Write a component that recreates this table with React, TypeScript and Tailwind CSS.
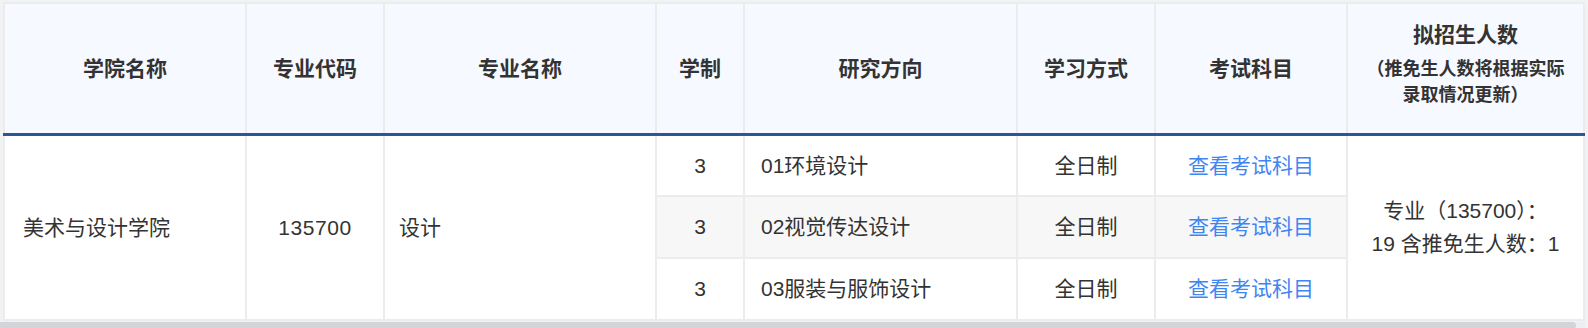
import React from "react";

const font = { fontFamily: '"Liberation Sans", "Noto Sans CJK SC", sans-serif' };

const rows = [
  { dir: "01环境设计", bg: "bg-white" },
  { dir: "02视觉传达设计", bg: "bg-[#f7f7f7]" },
  { dir: "03服装与服饰设计", bg: "bg-white" },
];

export default function App() {
  const th =
    "border-2 border-[#ececec] border-b-[3px] border-b-[#2d5697] bg-[#f6f9ff] text-[21px] font-bold text-[#333] text-center align-middle";
  const td = "border-2 border-[#ececec] text-[21px] align-middle";
  return (
    <div className="w-[1588px] h-[328px] bg-[#f1f2f4] pt-[2px] pl-[3px] overflow-hidden text-[#333]" style={font}>
      <table className="border-collapse table-fixed w-[1582px] bg-white">
        <colgroup>
          <col className="w-[242px]" />
          <col className="w-[138px]" />
          <col className="w-[272px]" />
          <col className="w-[88px]" />
          <col className="w-[273px]" />
          <col className="w-[138px]" />
          <col className="w-[192px]" />
          <col className="w-[237px]" />
        </colgroup>
        <thead>
          <tr className="h-[131px]">
            <th className={th}>学院名称</th>
            <th className={th}>专业代码</th>
            <th className={th}>专业名称</th>
            <th className={th}>学制</th>
            <th className={th}>研究方向</th>
            <th className={th}>学习方式</th>
            <th className={th}>考试科目</th>
            <th className={th + " pb-[9px]"}>
              <div className="leading-[30px] mb-[6px]">拟招生人数</div>
              <div className="text-[18px] leading-[26px] whitespace-nowrap">（推免生人数将根据实际</div>
              <div className="text-[18px] leading-[26px] whitespace-nowrap">录取情况更新）</div>
            </th>
          </tr>
        </thead>
        <tbody>
          {rows.map((r, i) => (
            <tr key={i} className="h-[62px]">
              {i === 0 && (
                <>
                  <td rowSpan={3} className={td + " px-[18px] text-left"}>美术与设计学院</td>
                  <td rowSpan={3} className={td + " text-center tracking-[0.6px]"}>135700</td>
                  <td rowSpan={3} className={td + " px-[14px] text-left"}>设计</td>
                </>
              )}
              <td className={td + " text-center " + r.bg}>3</td>
              <td className={td + " px-[16px] text-left " + r.bg}>{r.dir}</td>
              <td className={td + " text-center " + r.bg}>全日制</td>
              <td className={td + " text-center " + r.bg}>
                <span className="cursor-pointer text-[#3f86f2]">查看考试科目</span>
              </td>
              {i === 0 && (
                <td rowSpan={3} className={td + " text-center leading-[33px]"}>
                  <div className="whitespace-nowrap">专业（135700）：</div>
                  <div className="whitespace-nowrap">19 含推免生人数：1</div>
                </td>
              )}
            </tr>
          ))}
        </tbody>
      </table>
      <div className="mt-[1px] h-[8px] w-[1585px] -ml-[3px] bg-[#eceef1]">
        <div className="h-[7px] w-[1576px] bg-[#d2d4d9] rounded-r-[4px]" />
      </div>
    </div>
  );
}
